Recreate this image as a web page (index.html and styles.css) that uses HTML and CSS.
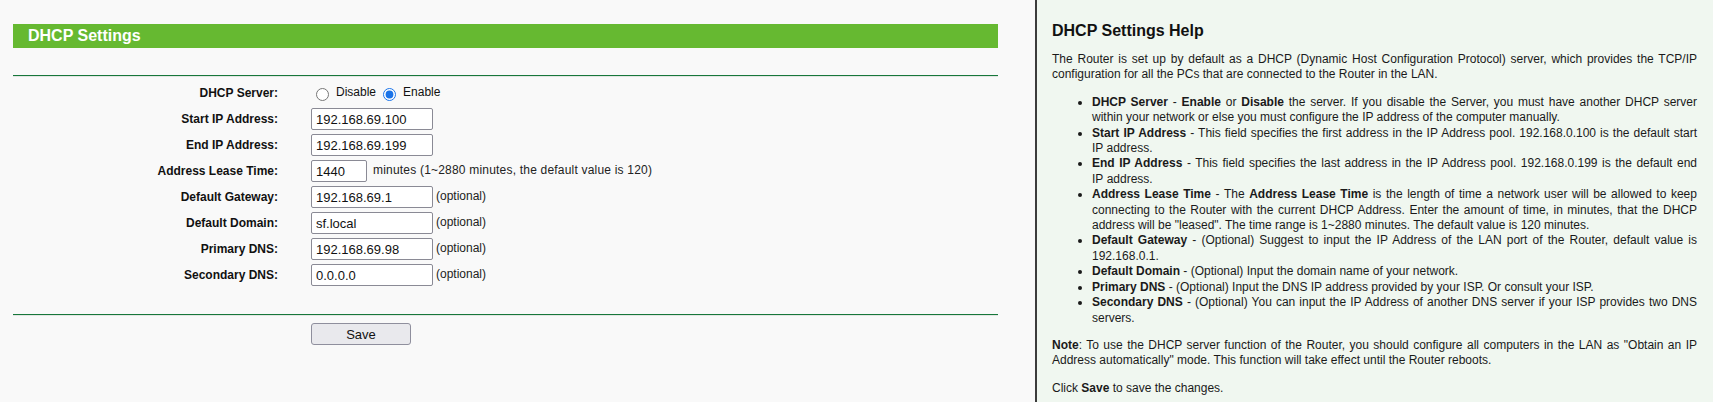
FILE: index.html
```html
<!DOCTYPE html>
<html lang="en">
<head>
    <meta charset="UTF-8">
    <meta name="viewport" content="width=device-width, initial-scale=1.0">
    <title>DHCP Settings</title>
    <link rel="stylesheet" href="styles.css">
</head>
<body>

<div class="page">
    <div class="main">
        <div class="title-bar">DHCP Settings</div>
        <div class="line"></div>

        <form class="settings" onsubmit="return false">
            <div class="row">
                <span class="label">DHCP Server:</span>
                <div class="field">
                    <input type="radio" id="dis" name="dhcp"><label for="dis" class="opt">Disable</label>
                    <input type="radio" id="en" name="dhcp" checked><label for="en" class="opt">Enable</label>
                </div>
            </div>
            <div class="row">
                <label class="label" for="start">Start IP Address:</label>
                <div class="field"><input type="text" id="start" class="ip" value="192.168.69.100"></div>
            </div>
            <div class="row">
                <label class="label" for="end">End IP Address:</label>
                <div class="field"><input type="text" id="end" class="ip" value="192.168.69.199"></div>
            </div>
            <div class="row">
                <label class="label" for="lease">Address Lease Time:</label>
                <div class="field">
                    <input type="text" id="lease" class="short" value="1440">
                    <span class="note">minutes (1~2880 minutes, the default value is 120)</span>
                </div>
            </div>
            <div class="row">
                <label class="label" for="gw">Default Gateway:</label>
                <div class="field"><input type="text" id="gw" class="ip" value="192.168.69.1"><span class="hint">(optional)</span></div>
            </div>
            <div class="row">
                <label class="label" for="dom">Default Domain:</label>
                <div class="field"><input type="text" id="dom" class="ip" value="sf.local"><span class="hint">(optional)</span></div>
            </div>
            <div class="row">
                <label class="label" for="dns1">Primary DNS:</label>
                <div class="field"><input type="text" id="dns1" class="ip" value="192.168.69.98"><span class="hint">(optional)</span></div>
            </div>
            <div class="row">
                <label class="label" for="dns2">Secondary DNS:</label>
                <div class="field"><input type="text" id="dns2" class="ip" value="0.0.0.0"><span class="hint">(optional)</span></div>
            </div>

            <div class="line bottom"></div>
            <div class="actions">
                <button type="submit" class="save-button">Save</button>
            </div>
        </form>
    </div>

    <div class="help">
        <h3>DHCP Settings Help</h3>
        <p>The Router is set up by default as a DHCP (Dynamic Host Configuration Protocol) server, which provides the TCP/IP configuration for all the PCs that are connected to the Router in the LAN.</p>
        <ul>
            <li><b>DHCP Server</b> - <b>Enable</b> or <b>Disable</b> the server. If you disable the Server, you must have another DHCP server within your network or else you must configure the IP address of the computer manually.</li>
            <li><b>Start IP Address</b> - This field specifies the first address in the IP Address pool. 192.168.0.100 is the default start IP address.</li>
            <li><b>End IP Address</b> - This field specifies the last address in the IP Address pool. 192.168.0.199 is the default end IP&nbsp;address.</li>
            <li><b>Address Lease Time</b> - The <b>Address Lease Time</b> is the length of time a network user will be allowed to keep connecting to the Router with the current DHCP Address. Enter the amount of time, in minutes, that the DHCP address will be "leased". The time range is 1~2880 minutes. The default value is 120 minutes.</li>
            <li><b>Default Gateway</b> - (Optional) Suggest to input the IP Address of the LAN port of the Router, default value is 192.168.0.1.</li>
            <li><b>Default Domain</b> - (Optional) Input the domain name of your network.</li>
            <li><b>Primary DNS</b> - (Optional) Input the DNS IP address provided by your ISP. Or consult your ISP.</li>
            <li><b>Secondary DNS</b> - (Optional) You can input the IP Address of another DNS server if your ISP provides two DNS servers.</li>
        </ul>
        <p><b>Note</b>: To use the DHCP server function of the Router, you should configure all computers in the LAN as "Obtain an IP Address automatically" mode. This function will take effect until the Router reboots.</p>
        <p>Click <b>Save</b> to save the changes.</p>
    </div>
</div>

</body>
</html>
```

FILE: styles.css
```css
body {
    font-family: "Liberation Sans", Arial, sans-serif;
    font-size: 12px;
    color: #111;
    margin: 0;
    background-color: #f9f9f9;
}
.page {
    display: flex;
    min-height: 100vh;
}
.main {
    flex: none;
    width: 985px;
    padding: 24px 37px 0 13px;
    background-color: #f9f9f9;
}
.title-bar {
    height: 24px;
    line-height: 24px;
    padding-left: 15px;
    background-color: #66b931;
    color: white;
    font-size: 16px;
    font-weight: bold;
}
.line {
    margin-top: 27px;
    border-top: 1px solid #17773b;
    border-bottom: 1px solid #e2e6e2;
}
.settings {
    margin: 0;
    padding-top: 3px;
}
.row {
    display: flex;
    align-items: center;
    height: 26px;
}
.label {
    width: 265px;
    margin-right: 33px;
    text-align: right;
    font-weight: bold;
    color: #111;
}
.field {
    display: flex;
    align-items: center;
}
.field input[type="radio"] {
    width: 13px;
    height: 13px;
    margin: 2px 7px 0 5px;
    accent-color: #1a73e8;
}
.opt {
    margin-top: -3px;
    margin-right: 2px;
    color: #111;
}
input[type="text"] {
    box-sizing: border-box;
    height: 22px;
    padding: 1px 4px;
    border: 1px solid #8a8a95;
    border-radius: 2px;
    background-color: white;
    font-family: "Liberation Sans", Arial, sans-serif;
    font-size: 13px;
    color: #111;
}
.ip {
    width: 122px;
}
.short {
    width: 56px;
}
.note {
    margin-left: 6px;
    margin-top: -3px;
    letter-spacing: 0.2px;
    color: #222;
}
.hint {
    margin-left: 3px;
    margin-top: -3px;
    color: #222;
}
.line.bottom {
    margin-top: 26px;
}
.actions {
    padding-top: 7px;
    padding-left: 298px;
}
.save-button {
    width: 100px;
    height: 22px;
    background-color: #e9e9ed;
    border: 1px solid #8f8f9d;
    border-radius: 3px;
    font-family: "Liberation Sans", Arial, sans-serif;
    font-size: 13px;
    color: #111;
    cursor: pointer;
}
.help {
    flex: 1;
    padding: 22px 16px 0 15px;
    border-left: 2px solid #3c3c3c;
    background-color: #f0f7f0;
    line-height: 15.4px;
    color: #1a1a1a;
}
.help h3 {
    margin: 0 0 12px 0;
    font-size: 16px;
    line-height: 18px;
    color: #111;
}
.help p {
    margin: 12px 0;
    text-align: justify;
}
.help ul {
    margin: 12px 0;
    padding-left: 40px;
}
.help li {
    text-align: justify;
}
```
